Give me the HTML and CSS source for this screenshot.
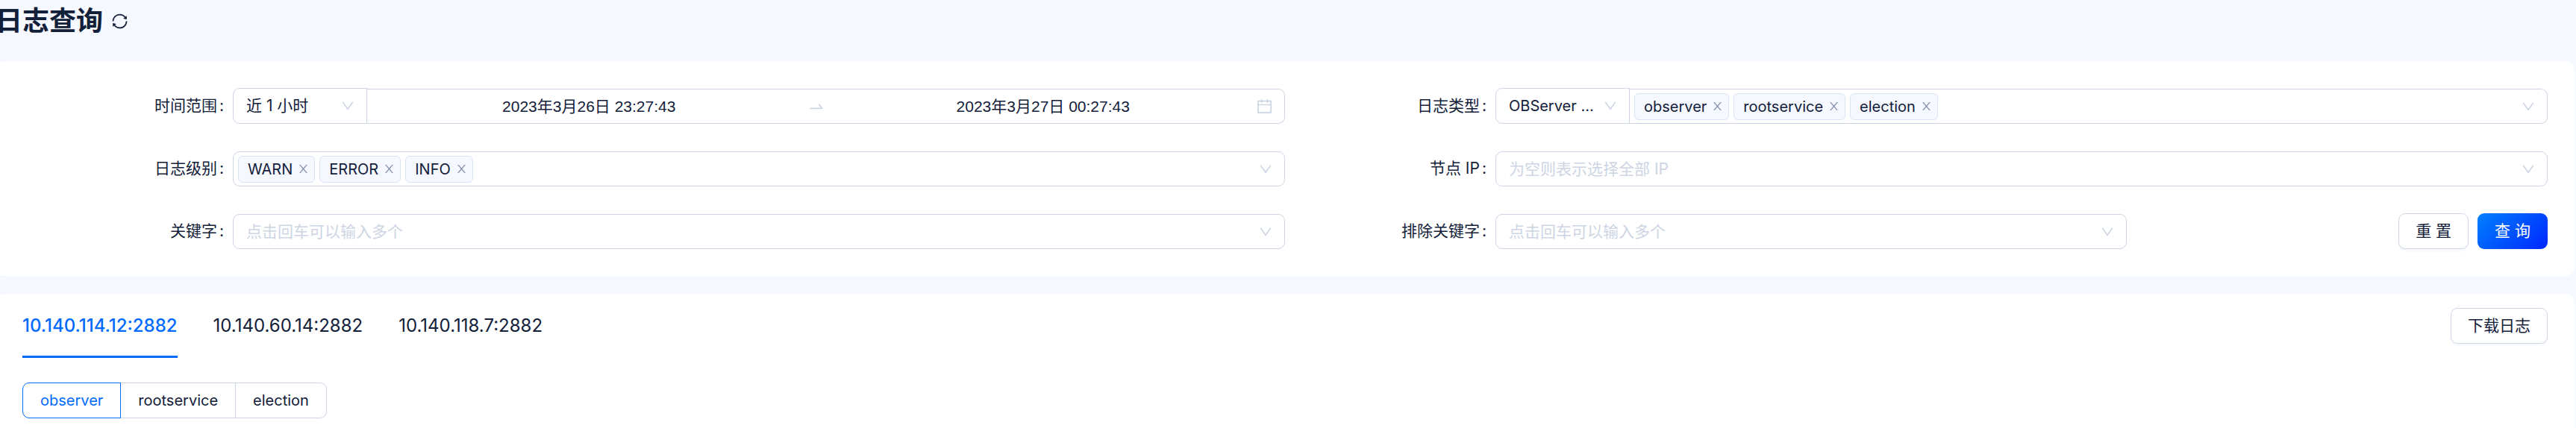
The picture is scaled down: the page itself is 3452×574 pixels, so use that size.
FILE: index.html
```html
<!DOCTYPE html>
<html lang="zh-CN">
<head>
    <meta charset="UTF-8">
    <meta name="viewport" content="width=device-width, initial-scale=1.0">
    <title>日志查询</title>
    <link rel="stylesheet" href="styles.css">
</head>
<body>
    <!-- Shared icons -->
    <svg class="sprite" aria-hidden="true">
        <symbol id="icon-down" viewBox="64 64 896 896">
            <path d="M884 256h-75c-5.1 0-9.9 2.5-12.9 6.6L512 654.2 227.9 262.6c-3-4.1-7.8-6.6-12.9-6.6h-75c-6.5 0-10.3 7.4-6.5 12.7l352.6 486.1c12.8 17.6 39 17.6 51.7 0l352.6-486.1c3.9-5.3.1-12.7-6.4-12.7z"/>
        </symbol>
        <symbol id="icon-close" viewBox="64 64 896 896">
            <path d="M563.8 512l262.5-312.9c4.4-5.2.7-13.1-6.1-13.1h-79.8c-4.7 0-9.2 2.1-12.3 5.7L511.6 449.8 295.1 191.7c-3-3.6-7.5-5.7-12.3-5.7H203c-6.8 0-10.5 7.9-6.1 13.1L459.4 512 196.9 824.9A7.95 7.95 0 00203 838h79.8c4.7 0 9.2-2.1 12.3-5.7l216.5-258.1 216.5 258.1c3 3.6 7.5 5.7 12.3 5.7h79.8c6.8 0 10.5-7.9 6.1-13.1L563.8 512z"/>
        </symbol>
        <symbol id="icon-swap" viewBox="0 0 1024 1024">
            <path d="M873.1 596.2l-164-208A32 32 0 00684 376h-64.8c-6.7 0-10.4 7.7-6.3 13l144.3 183H152c-4.4 0-8 3.6-8 8v60c0 4.4 3.6 8 8 8h695.9c26.8 0 41.7-30.8 25.2-51.8z"/>
        </symbol>
        <symbol id="icon-calendar" viewBox="64 64 896 896">
            <path d="M880 184H712v-64c0-4.4-3.6-8-8-8h-56c-4.4 0-8 3.6-8 8v64H384v-64c0-4.4-3.6-8-8-8h-56c-4.4 0-8 3.6-8 8v64H144c-17.7 0-32 14.3-32 32v664c0 17.7 14.3 32 32 32h736c17.7 0 32-14.3 32-32V216c0-17.7-14.3-32-32-32zm-40 656H184V460h656v380zM184 392V256h128v48c0 4.4 3.6 8 8 8h56c4.4 0 8-3.6 8-8v-48h256v48c0 4.4 3.6 8 8 8h56c4.4 0 8-3.6 8-8v-48h128v136H184z"/>
        </symbol>
        <symbol id="icon-sync" viewBox="64 64 896 896">
            <path d="M168 504.2c1-43.7 10-86.1 26.9-126 17.3-41 42.1-77.7 73.7-109.4S337 212.3 378 195c42.4-17.9 87.4-27 133.9-27s91.5 9.1 133.8 27A341.5 341.5 0 01755 268.8c9.9 9.9 19.2 20.4 27.8 31.4l-60.2 47a8 8 0 003 14.1l175.7 43c5 1.2 9.9-2.6 9.9-7.7l.8-180.9c0-6.7-7.7-10.5-12.9-6.3l-56.4 44.1C765.8 155.1 646.2 92 511.8 92 282.7 92 96.3 275.6 92 503.8a8 8 0 008 8.2h60c4.4 0 7.9-3.5 8-7.8zm756 7.8h-60c-4.4 0-7.9 3.5-8 7.8-1 43.7-10 86.1-26.9 126-17.3 41-42.1 77.8-73.7 109.4A342.45 342.45 0 01512.1 856a342.24 342.24 0 01-243.2-100.8c-9.9-9.9-19.2-20.4-27.8-31.4l60.2-47a8 8 0 00-3-14.1l-175.7-43c-5-1.2-9.9 2.6-9.9 7.7l-.7 181c0 6.7 7.7 10.5 12.9 6.3l56.4-44.1C258.2 868.9 377.8 932 512.2 932c229.2 0 415.5-183.7 419.8-411.8a8 8 0 00-8-8.2z"/>
        </symbol>
    </svg>

    <div class="page">
        <header class="page-header">
            <h1>日志查询</h1>
            <button type="button" class="icon-btn" aria-label="刷新"><svg class="icon-sync"><use href="#icon-sync"/></svg></button>
        </header>

        <form class="card filters">
            <div class="field">
                <label for="range">时间范围</label>
                <div class="control">
                    <div class="select">
                        <select id="range"><option>近 1 小时</option></select>
                        <svg class="arrow"><use href="#icon-down"/></svg>
                    </div>
                    <div class="box picker">
                        <input type="text" value="2023年3月26日 23:27:43" aria-label="开始时间">
                        <svg class="swap"><use href="#icon-swap"/></svg>
                        <input type="text" value="2023年3月27日 00:27:43" aria-label="结束时间">
                        <svg class="calendar"><use href="#icon-calendar"/></svg>
                    </div>
                </div>
            </div>

            <div class="field">
                <label for="logType">日志类型</label>
                <div class="control">
                    <div class="select">
                        <select id="logType" class="latin"><option>OBServer ...</option></select>
                        <svg class="arrow"><use href="#icon-down"/></svg>
                    </div>
                    <div class="box tags">
                        <span class="tag latin">observer<button type="button" aria-label="移除"><svg><use href="#icon-close"/></svg></button></span>
                        <span class="tag latin">rootservice<button type="button" aria-label="移除"><svg><use href="#icon-close"/></svg></button></span>
                        <span class="tag latin">election<button type="button" aria-label="移除"><svg><use href="#icon-close"/></svg></button></span>
                        <input type="text" aria-label="日志类型">
                        <svg class="arrow"><use href="#icon-down"/></svg>
                    </div>
                </div>
            </div>

            <div class="field">
                <label for="level">日志级别</label>
                <div class="control">
                    <div class="box tags">
                        <span class="tag latin">WARN<button type="button" aria-label="移除"><svg><use href="#icon-close"/></svg></button></span>
                        <span class="tag latin">ERROR<button type="button" aria-label="移除"><svg><use href="#icon-close"/></svg></button></span>
                        <span class="tag latin">INFO<button type="button" aria-label="移除"><svg><use href="#icon-close"/></svg></button></span>
                        <input type="text" id="level">
                        <svg class="arrow"><use href="#icon-down"/></svg>
                    </div>
                </div>
            </div>

            <div class="field">
                <label for="ip">节点 IP</label>
                <div class="control">
                    <div class="box">
                        <input type="text" id="ip" placeholder="为空则表示选择全部 IP">
                        <svg class="arrow"><use href="#icon-down"/></svg>
                    </div>
                </div>
            </div>

            <div class="field">
                <label for="keyword">关键字</label>
                <div class="control">
                    <div class="box">
                        <input type="text" id="keyword" placeholder="点击回车可以输入多个">
                        <svg class="arrow"><use href="#icon-down"/></svg>
                    </div>
                </div>
            </div>

            <div class="field with-actions">
                <label for="exclude">排除关键字</label>
                <div class="control">
                    <div class="box">
                        <input type="text" id="exclude" placeholder="点击回车可以输入多个">
                        <svg class="arrow"><use href="#icon-down"/></svg>
                    </div>
                </div>
                <div class="actions">
                    <button type="reset" class="btn">重 置</button>
                    <button type="button" class="btn primary">查 询</button>
                </div>
            </div>
        </form>

        <section class="card results">
            <div class="tab-bar">
                <nav class="tabs">
                    <a href="#" class="tab active">10.140.114.12:2882</a>
                    <a href="#" class="tab">10.140.60.14:2882</a>
                    <a href="#" class="tab">10.140.118.7:2882</a>
                </nav>
                <button type="button" class="btn">下载日志</button>
            </div>
            <div class="radio-group latin">
                <label><input type="radio" name="log" checked><span>observer</span></label>
                <label><input type="radio" name="log"><span>rootservice</span></label>
                <label><input type="radio" name="log"><span>election</span></label>
            </div>
        </section>
    </div>
</body>
</html>
```
FILE: styles.css
```css
* { box-sizing: border-box; }
body {
    margin: 0;
    overflow-x: hidden;
    font-family: Inter, "Noto Sans CJK SC", sans-serif;
    font-size: 21px;
    line-height: 32px;
    background: #f5f8ff;
    color: #132039;
}
svg { display: block; fill: currentColor; flex: none; }
.sprite { position: absolute; width: 0; height: 0; }
input, select, button {
    font: inherit;
    color: inherit;
    margin: 0;
    padding: 0;
    border: none;
    background: none;
    outline: none;
}
button, select { cursor: pointer; }
.latin { font-size: 20px; }

.page {
    display: flex;
    flex-direction: column;
    min-height: 100vh;
    margin: 0 2px 0 -6px;
}
.page-header {
    display: flex;
    align-items: center;
    gap: 12px;
    height: 56px;
    margin-bottom: 26px;
}
h1 { margin: 0; font-size: 36px; line-height: 56px; font-weight: 600; }
.icon-sync { width: 21px; height: 21px; }

.card { background: #fff; border-radius: 12px; padding: 36px; }
.filters {
    display: grid;
    grid-template-columns: 1fr 1fr;
    row-gap: 36px;
    margin-bottom: 24px;
}

.field {
    display: grid;
    grid-template-columns: 4fr 20fr;
    height: 48px;
}
.field.with-actions { grid-template-columns: 4fr 12fr 8fr; }
.field > label { padding-right: 12px; line-height: 48px; text-align: right; }
.field > label::after { content: ":"; margin-left: 3px; }
.control { display: flex; align-items: flex-end; min-width: 0; }

.select { position: relative; width: 180px; height: 48px; }
.select select {
    appearance: none;
    width: 100%;
    height: 100%;
    padding: 0 40px 0 17px;
    border: 1px solid #cdd5e4;
    border-radius: 9px 0 0 9px;
}
.arrow { width: 18px; height: 18px; color: #cdd5e4; }
.select .arrow { position: absolute; right: 17px; top: 15px; pointer-events: none; }

.box {
    display: flex;
    align-items: center;
    flex: 1;
    height: 47px;
    min-width: 0;
    padding: 0 16px 0 17px;
    border: 1px solid #cdd5e4;
    border-radius: 9px;
}
.box input { flex: 1; min-width: 0; height: 32px; }
.box input::placeholder { color: #cdd5e4; opacity: 1; }
.select + .box { border-left: none; border-radius: 0 9px 9px 0; }

.picker input { font-family: "Liberation Sans", "Noto Sans CJK SC", sans-serif; text-align: center; }
.swap { width: 24px; height: 24px; margin: 0 12px; color: #cdd5e4; }
.calendar { width: 21px; height: 21px; margin-left: 6px; color: #cdd5e4; }

.tags { gap: 6px; padding-left: 6px; }
.tag {
    display: flex;
    align-items: center;
    gap: 7px;
    height: 36px;
    padding: 0 7px 0 12px;
    border: 1px solid #dae3f5;
    border-radius: 6px;
    background: #f5f8ff;
}
.tag svg { width: 15px; height: 15px; color: #8592ad; }

.actions { display: flex; justify-content: flex-end; gap: 12px; }
.btn {
    height: 48px;
    padding: 0 22px;
    border: 1px solid #cdd5e4;
    border-radius: 9px;
    background: #fff;
    box-shadow: 0 3px 0 #f8faff;
}
.btn.primary {
    border-color: transparent;
    background: linear-gradient(135deg, #0181fd, #0026ff) border-box;
    box-shadow: none;
    color: #fff;
}

.results { flex: 1; padding-top: 0; padding-bottom: 12px; border-radius: 12px 12px 0 0; }
.tab-bar {
    display: flex;
    align-items: center;
    justify-content: space-between;
    height: 86px;
    margin-bottom: 33px;
}
.tabs { display: flex; gap: 48px; height: 100%; }
.tab {
    font-size: 24px;
    line-height: 86px;
    color: inherit;
    text-decoration: none;
}
.tab.active { color: #006aff; font-weight: 500; border-bottom: 3px solid #006aff; }

.radio-group { display: flex; }
.radio-group label { position: relative; cursor: pointer; }
.radio-group input { position: absolute; opacity: 0; }
.radio-group span {
    display: block;
    height: 48px;
    padding: 0 23px;
    line-height: 46px;
    border: 1px solid #cdd5e4;
}
.radio-group label + label { margin-left: -1px; }
.radio-group label:first-child span { border-radius: 9px 0 0 9px; }
.radio-group label:last-child span { border-radius: 0 9px 9px 0; }
.radio-group input:checked + span { position: relative; z-index: 1; border-color: #006aff; color: #006aff; }
```
